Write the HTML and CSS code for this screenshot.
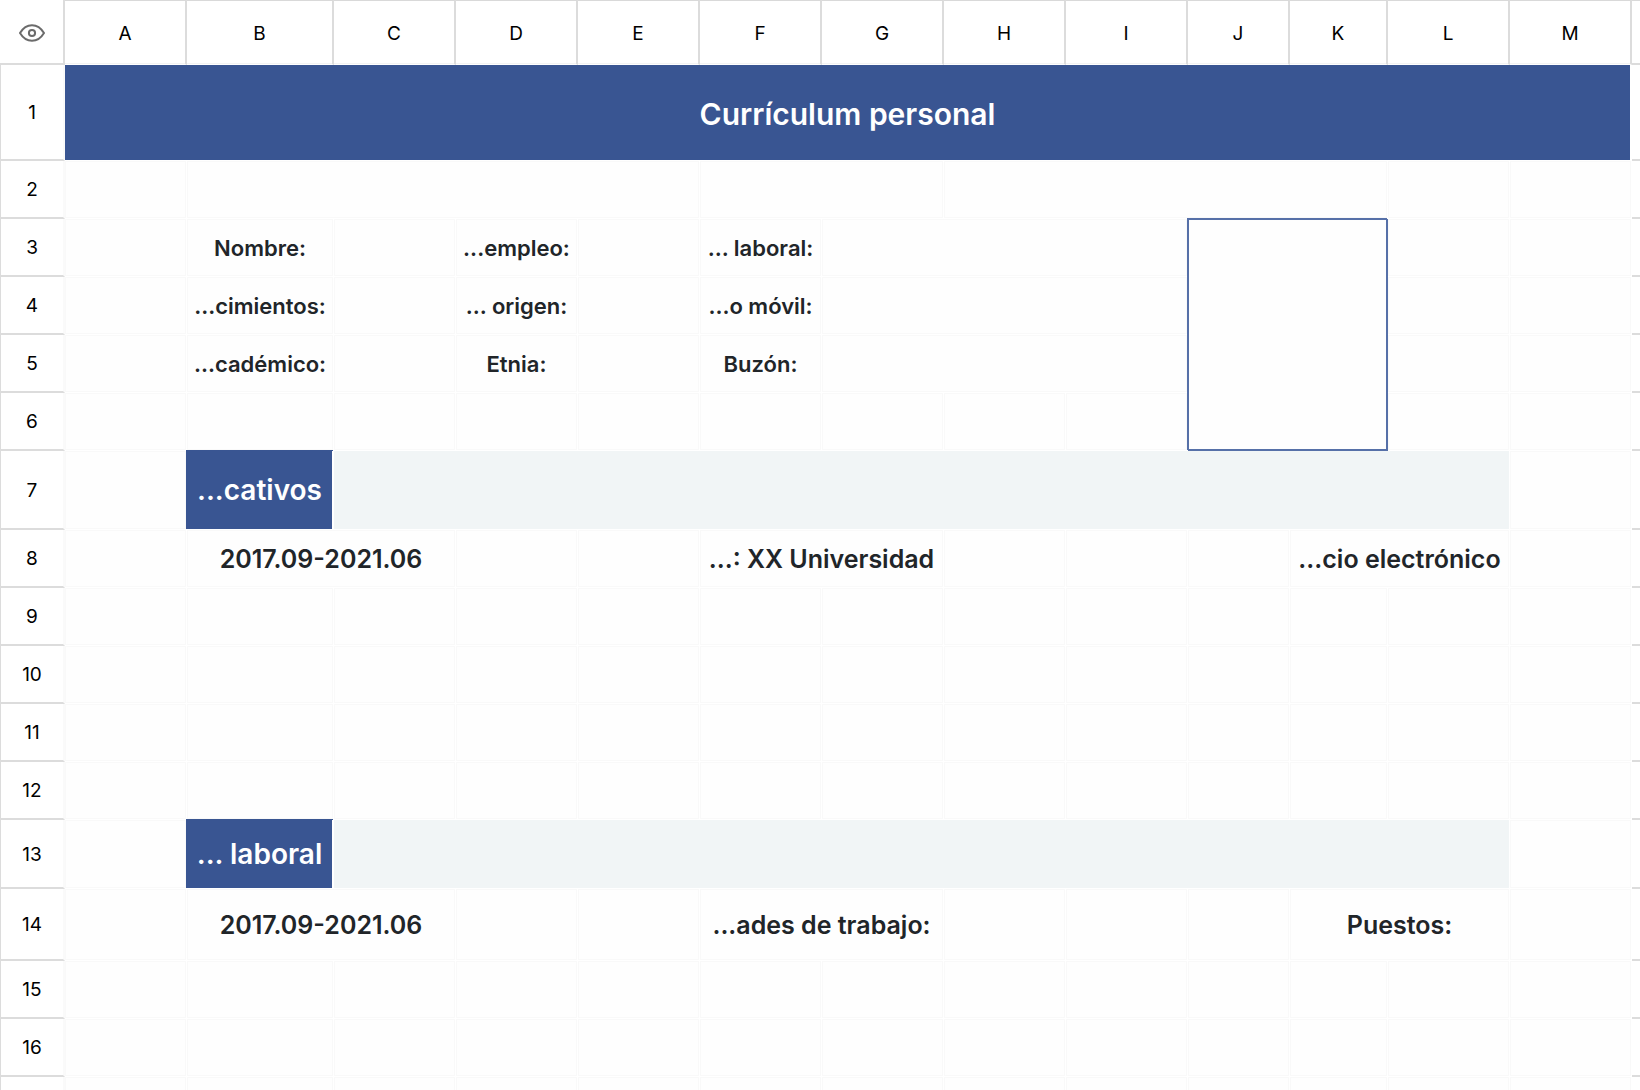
FILE: index.html
```html
<!DOCTYPE html>
<html lang="es">
<head>
    <meta charset="UTF-8">
    <meta name="viewport" content="width=device-width, initial-scale=1.0">
    <title>Currículum personal</title>
    <link rel="stylesheet" href="styles.css">
</head>
<body>
    <table class="sheet">
        <colgroup>
            <col class="col-index">
            <col>
            <col class="col-b">
            <col span="7">
            <col class="col-j">
            <col class="col-k">
            <col span="2">
            <col class="col-rest">
        </colgroup>
        <thead>
            <tr>
                <th class="corner">
                    <button type="button" class="view-btn" aria-label="Vista">
                        <svg viewBox="0 0 26 18" width="26" height="18" fill="none" stroke="#6b6b6b" stroke-width="2">
                            <path d="M1 9C4 4 8 1.2 13 1.2S22 4 25 9C22 14 18 16.8 13 16.8S4 14 1 9Z" stroke-linejoin="round"/>
                            <circle cx="13" cy="9" r="3.1"/>
                        </svg>
                    </button>
                </th>
                <th>A</th><th>B</th><th>C</th><th>D</th><th>E</th><th>F</th><th>G</th>
                <th>H</th><th>I</th><th>J</th><th>K</th><th>L</th><th>M</th><th></th>
            </tr>
        </thead>
        <tbody>
            <tr class="row-title">
                <th>1</th>
                <td colspan="13" class="title">Currículum personal</td>
                <th></th>
            </tr>
            <tr>
                <th>2</th>
                <td></td><td colspan="4"></td><td colspan="2"></td><td colspan="4"></td><td></td><td></td>
                <th></th>
            </tr>
            <tr>
                <th>3</th>
                <td></td><td class="label">Nombre:</td><td></td><td class="label">...empleo:</td><td></td><td class="label">... laboral:</td><td colspan="3"></td>
                <td colspan="2" rowspan="4" class="photo"></td><td></td><td></td>
                <th></th>
            </tr>
            <tr>
                <th>4</th>
                <td></td><td class="label">...cimientos:</td><td></td><td class="label">... origen:</td><td></td><td class="label">...o móvil:</td><td colspan="3"></td>
                <td></td><td></td>
                <th></th>
            </tr>
            <tr>
                <th>5</th>
                <td></td><td class="label">...cadémico:</td><td></td><td class="label">Etnia:</td><td></td><td class="label">Buzón:</td><td colspan="3"></td>
                <td></td><td></td>
                <th></th>
            </tr>
            <tr>
                <th>6</th>
                <td></td><td></td><td></td><td></td><td></td><td></td><td></td><td></td><td></td>
                <td></td><td></td>
                <th></th>
            </tr>
            <tr class="row-education">
                <th>7</th>
                <td></td><td class="section">...cativos</td><td colspan="10" class="band"></td><td></td>
                <th></th>
            </tr>
            <tr>
                <th>8</th>
                <td></td><td colspan="2" class="entry">2017.09-2021.06</td><td></td><td></td>
                <td colspan="2" class="entry">...: XX Universidad</td><td></td><td></td><td></td>
                <td colspan="2" class="entry">...cio electrónico</td><td></td>
                <th></th>
            </tr>
            <tr>
                <th>9</th>
                <td></td><td></td><td></td><td></td><td></td><td></td><td></td><td></td><td></td><td></td><td></td><td></td><td></td>
                <th></th>
            </tr>
            <tr>
                <th>10</th>
                <td></td><td></td><td></td><td></td><td></td><td></td><td></td><td></td><td></td><td></td><td></td><td></td><td></td>
                <th></th>
            </tr>
            <tr>
                <th>11</th>
                <td></td><td></td><td></td><td></td><td></td><td></td><td></td><td></td><td></td><td></td><td></td><td></td><td></td>
                <th></th>
            </tr>
            <tr>
                <th>12</th>
                <td></td><td></td><td></td><td></td><td></td><td></td><td></td><td></td><td></td><td></td><td></td><td></td><td></td>
                <th></th>
            </tr>
            <tr class="row-work">
                <th>13</th>
                <td></td><td class="section">... laboral</td><td colspan="10" class="band"></td><td></td>
                <th></th>
            </tr>
            <tr class="row-job">
                <th>14</th>
                <td></td><td colspan="2" class="entry">2017.09-2021.06</td><td></td><td></td>
                <td colspan="2" class="entry">...ades de trabajo:</td><td></td><td></td><td></td>
                <td colspan="2" class="entry">Puestos:</td><td></td>
                <th></th>
            </tr>
            <tr>
                <th>15</th>
                <td></td><td></td><td></td><td></td><td></td><td></td><td></td><td></td><td></td><td></td><td></td><td></td><td></td>
                <th></th>
            </tr>
            <tr>
                <th>16</th>
                <td></td><td></td><td></td><td></td><td></td><td></td><td></td><td></td><td></td><td></td><td></td><td></td><td></td>
                <th></th>
            </tr>
            <tr>
                <th></th>
                <td></td><td></td><td></td><td></td><td></td><td></td><td></td><td></td><td></td><td></td><td></td><td></td><td></td>
                <th></th>
            </tr>
        </tbody>
    </table>
</body>
</html>
```
FILE: styles.css
```css
body {
    margin: 0;
    overflow: hidden;
    background: #fff;
    color: #212529;
    font-family: Inter, "Liberation Sans", sans-serif;
}

.sheet {
    width: 100%;
    table-layout: fixed;
    border-collapse: separate;
    border-spacing: 0;
}

.col-index {
    width: 65px;
}

.col-b {
    width: 147px;
}

.col-j {
    width: 102px;
}

.col-k {
    width: 98px;
}

.col-rest {
    width: 8px;
}

tr {
    height: 58px;
}

th, td {
    box-sizing: border-box;
    padding: 0;
    text-align: center;
    vertical-align: middle;
    white-space: nowrap;
}

th {
    padding-top: 1px;
    color: #000;
    font-size: 19px;
    font-weight: 400;
}

thead tr {
    height: 65px;
}

thead th {
    border-top: 1px solid #d9d9d9;
    border-right: 2px solid #dcdcdc;
    border-bottom: 1px solid #fff;
    box-shadow: inset 0 -1px #f3f3f3;
}

thead .corner {
    border-top: 0;
    border-bottom: 2px solid #dcdcdc;
    box-shadow: none;
}

thead th:last-child {
    border-right: 0;
    border-bottom: 2px solid #dcdcdc;
    box-shadow: none;
}

tbody th {
    border-bottom: 2px solid #dcdcdc;
}

tbody th:first-child {
    border-left: 1px solid #dcdcdc;
    border-right: 2px solid #fafafa;
}

/* faint outline in every cell, with a white gap between neighbours */
td {
    border-right: 1px solid #fff;
    border-bottom: 1px solid #fff;
    background: #fefefe;
    box-shadow: inset 0 0 0 1px #f9f9f9;
}

.view-btn {
    display: inline-flex;
    padding: 0;
    border: 0;
    background: none;
    vertical-align: middle;
    cursor: pointer;
}

.row-title {
    height: 96px;
}

.row-education {
    height: 79px;
}

.row-work {
    height: 69px;
}

.row-job {
    height: 72px;
}

.title {
    padding-top: 2px;
    border-right: 2px solid #fff;
    background: #395592;
    box-shadow: none;
    color: #fff;
    font-size: 30px;
    font-weight: 600;
}

.label {
    font-size: 22px;
    font-weight: 600;
}

.entry {
    font-size: 25px;
    font-weight: 600;
}

.section {
    border-right: 2px solid #fff;
    background: #395592;
    box-shadow: -1px -1px #395592;
    color: #fff;
    font-size: 28px;
    font-weight: 600;
}

.band {
    background: #f1f5f6;
    box-shadow: none;
}

/* raised so that its frame covers the lines of the cells around it */
.photo {
    position: relative;
    border: 2px solid #5670a8;
    border-top-width: 1px;
    border-left-width: 1px;
    box-shadow: -1px -1px #5670a8;
}
```
